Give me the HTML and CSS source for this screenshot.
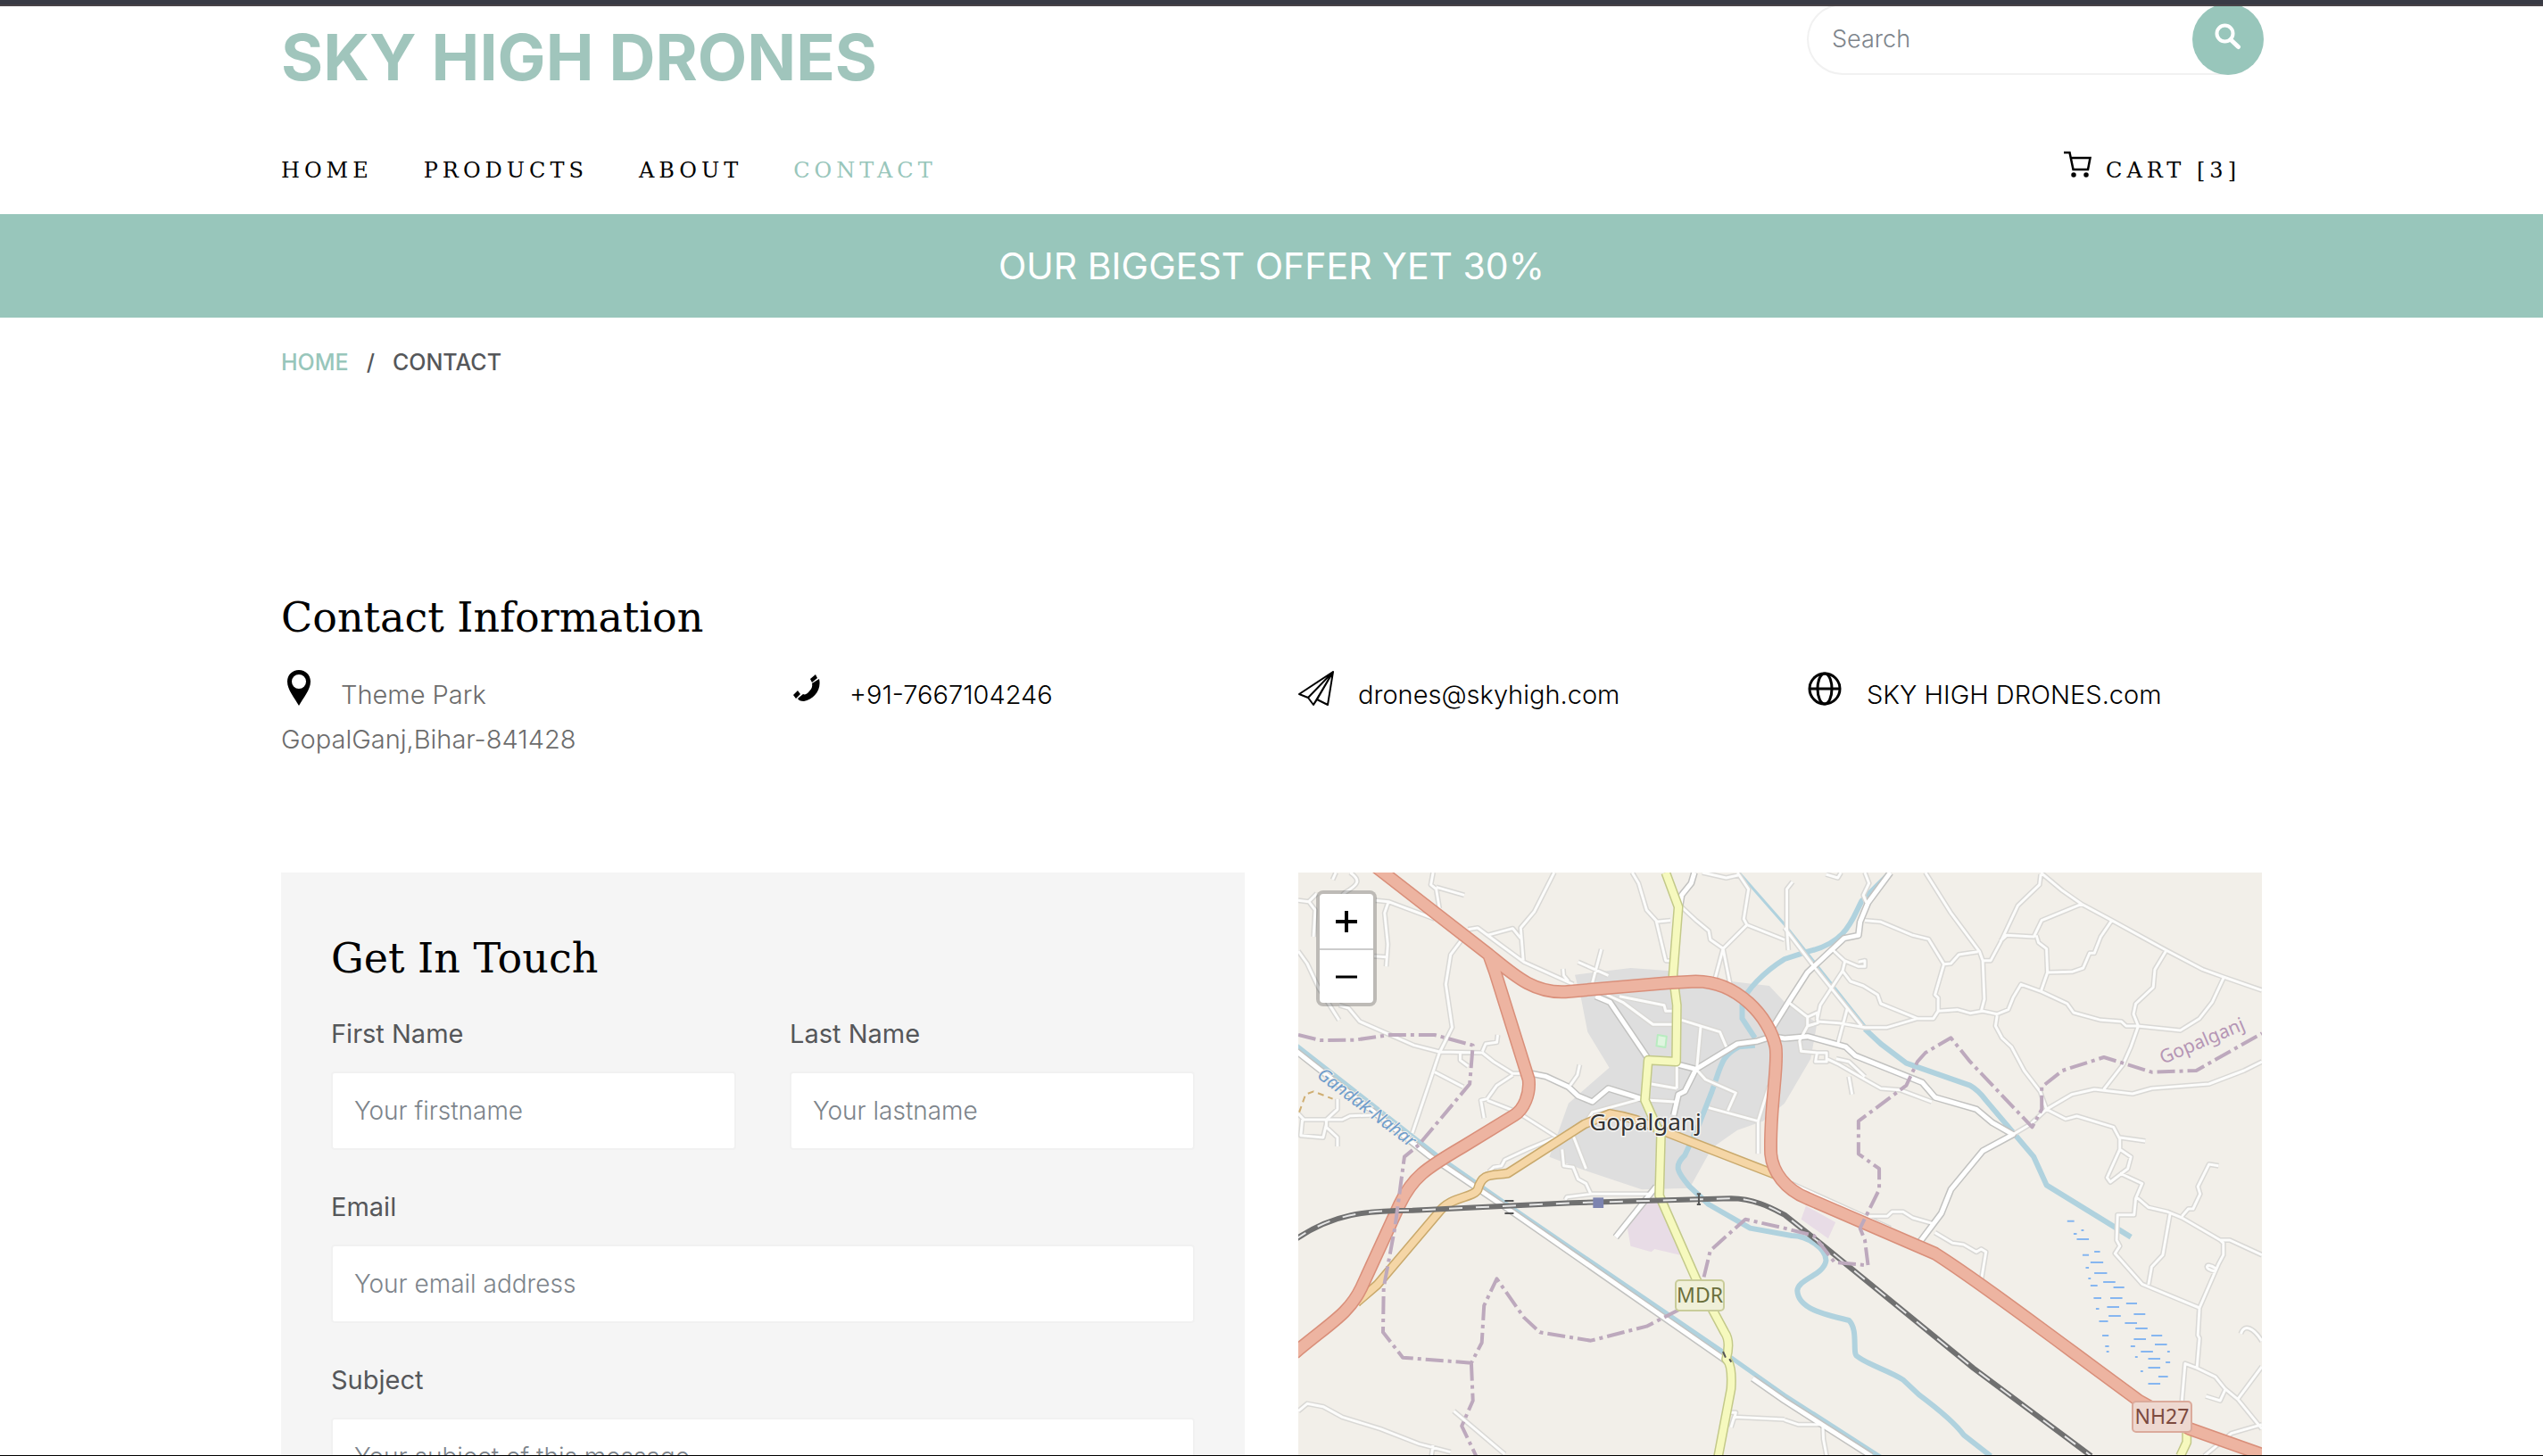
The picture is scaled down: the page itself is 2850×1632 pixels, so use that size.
FILE: index.html
```
<!DOCTYPE html>
<html lang="en">
<head>
<meta charset="utf-8">
<meta name="viewport" content="width=device-width, initial-scale=1">
<title>Contact - SKY HIGH DRONES</title>
<link rel="stylesheet" href="styles.css">
</head>
<body>
<div class="page">
  <header class="container">
    <div class="header-top">
      <a class="logo" href="#">SKY HIGH DRONES</a>
      <form class="search">
        <input type="search" placeholder="Search" aria-label="Search">
        <button type="submit" aria-label="Search">
          <svg width="30" height="30" viewBox="0 0 30 30" fill="none" stroke="#fff"><circle cx="11.500" cy="11.500" r="9" stroke-width="4"/><path d="M18 18.500l8.500 8" stroke-width="5" stroke-linecap="round"/></svg>
        </button>
      </form>
    </div>
    <nav class="nav">
      <a href="#">HOME</a>
      <a href="#">PRODUCTS</a>
      <a href="#">ABOUT</a>
      <a class="active" href="#">CONTACT</a>
      <a class="cart" href="#"><svg width="31" height="30" viewBox="0 0 31 30" fill="none" stroke="#000" stroke-width="2.500"><path d="M0 2h6.500l4 19h16.500l2.500-13H8"/><circle cx="11" cy="27" r="1.500" fill="#000"/><circle cx="25" cy="27" r="1.500" fill="#000"/></svg>CART [3]</a>
    </nav>
  </header>

  <div class="offer">OUR BIGGEST OFFER YET 30%</div>

  <div class="container breadcrumb"><a href="#">HOME</a><span class="slash">/</span><strong>CONTACT</strong></div>

  <main class="container">
    <section class="info">
      <h2>Contact Information</h2>
      <div class="info-row">
        <p class="address"><svg class="icon" width="44" height="42" viewBox="0 0 44 42"><path fill-rule="evenodd" d="M20 1c7.500 0 13 5.500 13 13 0 9-8 18-13 27-5-9-13-18-13-27C7 6.500 12.500 1 20 1zm0 5a8 8 0 1 0 0 16 8 8 0 0 0 0-16z"/></svg>Theme Park<br>GopalGanj,Bihar-841428</p>
        <p><a href="#"><svg class="icon" width="44" height="42" viewBox="0 0 44 42"><path d="M33 11c3 12-6 23-17 25-4 0-6-1-7-3l6-5c2 1 4 0 6-2 3-3 5-6 4-10zM4 29l5-5 3 4-5 5zM23 11l6-5 2 4-6 5z"/></svg>+91-7667104246</a></p>
        <p><a href="#"><svg class="icon" width="44" height="42" viewBox="0 0 44 42" fill="none" stroke="#000" stroke-width="2" stroke-linejoin="round"><path d="M39 3L1 28l10 4 6 8 4-6 12 6zM39 3L11 32M39 3L17 40M39 3L21 34"/></svg>drones@skyhigh.com</a></p>
        <p><a href="#"><svg class="icon" width="44" height="42" viewBox="0 0 44 42" fill="none" stroke="#000" stroke-width="3"><circle cx="20" cy="22" r="17"/><ellipse cx="20" cy="22" rx="8" ry="17"/><path d="M3 22h34"/></svg>SKY HIGH DRONES.com</a></p>
      </div>
    </section>

    <section class="columns">
      <form class="card">
        <h2>Get In Touch</h2>
        <div class="fields">
          <div class="field"><label for="fname">First Name</label><input id="fname" type="text" placeholder="Your firstname"></div>
          <div class="field"><label for="lname">Last Name</label><input id="lname" type="text" placeholder="Your lastname"></div>
          <div class="field wide"><label for="email">Email</label><input id="email" type="email" placeholder="Your email address"></div>
          <div class="field wide"><label for="subject">Subject</label><input id="subject" type="text" placeholder="Your subject of this message"></div>
        </div>
      </form>

      <div class="map">
        <svg class="tiles" viewBox="0 0 1080 654" role="img" aria-label="Map of Gopalganj">
          <defs>
            <path id="lanes" d="M150 78l10-24M205 54C240 80 230 95 190 120L180 130M42 148L75 152L100 125M285 148L325 152L470 210M325 152L313 190L323 295L318 370M280 335L318 338M75 152L95 180L90 270M42 318L70 360L105 440L170 550M465 54L458 95L475 110L485 175M475 103L563 130M845 54L783 185L740 240L748 350M575 245L605 240L680 300L750 355L905 430M635 265L715 242L740 275M555 280L520 330L505 430L525 575L485 660L460 740L400 930M170 500L200 510L235 555L405 635L485 657L620 660L655 690L715 730L770 730M620 655L630 630L665 625L668 600M550 660L550 685L575 705M470 725L560 775M715 735L665 770L635 815L615 820L625 880M635 820L730 860L855 945M925 700L918 735L895 770M920 355L1015 400M993 312L965 425M873 378L875 400L890 420M42 865L60 885L130 885L180 885L205 872L280 870M165 815L165 850L130 885L130 910L165 945L165 975M55 885L50 938L120 945L130 900M1090 54L1110 90L1135 180L1165 215L1195 350L1215 352M1165 220L1210 215M1240 165L1290 215L1330 250L1335 280L1375 310L1350 410M1375 310L1400 445M1375 310L1450 230L1440 210L1455 110L1420 54M1450 230L1568 280M1310 54L1385 72L1425 62M1010 465L1060 490L1155 565L1220 565M1050 470L1190 500L1195 520L1220 520M1245 550L1365 590L1385 640M1305 570L1293 710M1150 765L1230 780M1145 820L1225 825M1230 705L1230 780M1290 715L1320 750L1415 795L1390 855M1330 845L1485 890M1520 770L1485 890L1485 1000M1120 815L965 860L940 900M1593 85L1575 110L1575 240L1580 315M1698 60L1735 72L1745 54M1820 54L1833 90L1815 130L1825 155M2010 54L2090 190L2180 320L2190 350L2215 350L2245 290L2300 165L2368 95L2372 60M2372 54L2440 115L2500 160L2595 215L2765 315L2880 380L2945 405L3066 450M1820 215L1870 220L1970 265L2020 278L2068 362L2090 360L2115 330L2175 320M2068 362L2040 465L2050 475L2050 520L2035 545L1985 545L1890 575L1820 575L1740 560L1670 555M2050 520L2110 515L2150 527L2190 520L2235 530L2270 515L2285 475L2310 430L2375 455L2455 495L2475 525L2560 550L2625 555L2640 570L2675 570L2810 585L2870 545L2910 490L2945 410M2190 350L2195 480L2185 520M2245 285L2265 265L2350 270L2375 215L2500 160M2358 265L2365 290L2390 310L2393 390L2372 455M2393 390L2470 388L2505 375L2525 325L2540 325L2560 270L2595 215M2765 318L2730 380L2725 440L2670 495L2663 530L2678 570L2655 640L2630 700L2570 783M2235 535L2230 570L2250 610L2280 640L2320 720L2370 790L2390 850M2285 935L2340 900L2390 850L2470 800L2540 783L2660 798L2720 780L2900 765L3010 720L3066 690M2390 850L2450 883L2485 873L2600 910L2620 950L2620 985L2580 1080L2590 1095L2645 1050L2655 1010L2620 985M2620 945L2700 957M1568 240L1660 370L1810 570M1720 315L1755 350L1800 370L1820 370L1820 350L1800 355M1758 350L1750 385L1680 500L1670 550M1750 385L1775 420L1815 435L1860 465L1870 495L1985 545M1765 510L1750 570L1735 630M1580 490L1640 540L1670 525L1672 560L1640 570L1640 540M1640 570L1615 620L1620 655L1670 660L1665 690L1700 690L1700 660L1670 660M1700 680L1740 700L1820 750L1870 780L1930 785L2030 825M1770 740L1775 770L1780 800M1730 680L1770 690L1820 740M2620 1065L2690 1100L2670 1150L2665 1205L2613 1205L2610 1290L2620 1310L2605 1335L2690 1438L2870 1518L2930 1370L2945 1340L2945 1300L2935 1290L2815 1215L2770 1195L2710 1180L2672 1145M2935 1290L2965 1290L3066 1340M2815 1210L2835 1185L2850 1185L2872 1135L2865 1110L2900 1035L2930 1040M2778 1200L2755 1340L2720 1380L2710 1440M2870 1518L2865 1610L2870 1620L2862 1720L2825 1705L2815 1830M2862 1720L2920 1750L2950 1790L2990 1825L3066 1925M2950 1795L2935 1830L2890 1815M2990 1825L3066 1715M3066 1910L2970 1940L2885 2016M3000 1605C3010 1570 3040 1585 3066 1630M2920 1395C2880 1390 2890 1360 2920 1385M2183 1440L2200 1330L2185 1320L2170 1330L2130 1305L2095 1300L2040 1265M1830 1210L1890 1210L1905 1195L1940 1195L1970 1215L2035 1235M1590 1100L1900 1250M1568 1895L1610 1910L1680 1910M1688 1910L1690 1960L1700 2016M42 1865L70 1840L120 1850L180 1885L300 1925L420 1975L520 2003M465 1980L460 2016M530 1865L690 2010M1568 1893L1410 1885L1400 1920M1395 1870L1415 1870L1410 1890M640 1060L655 1045L680 1040L690 1020L760 985L850 945M870 985L875 1040L905 1045L920 1085L945 1100L960 1135M905 940L945 1050M880 1155L885 1145L960 1135L1150 1135"/>
            <path id="streets" d="M1285 54L1275 90L1245 130L1240 165M975 470L1020 490L1140 680M775 730L820 740L890 775L920 805L965 825L1015 780L1120 815M1235 700L1290 715L1420 630L1480 622L1530 605L1568 612L1640 605L1760 640L1790 670L2000 760L2040 810L2170 850L2220 895L2285 935L2190 990L2090 1120L2060 1200L1990 1300M1290 715L1255 790L1235 800L1220 870M1525 585L1580 490L1640 390L1755 275L1800 265L1805 220L1830 155L1900 54M1165 1110L1038 1280M30 650L455 1008L720 1200L1390 1700M1468 1755L1568 1830L1840 2016"/>
            <path id="county" d="M1195 54L1235 170L1218 400L1230 500L1228 690L1140 685L1130 820L1180 940L1175 1140L1290 1420L1380 1600Q1400 1630 1385 1690Q1405 1710 1400 1790L1360 2016M2830 1930L2830 1970L2810 2016"/>
            <path id="secondary" d="M225 1500L290 1440L480 1200C520 1140 590 1150 605 1120C620 1060 650 1075 700 1065L940 900L1020 865C1080 875 1120 890 1180 920L1540 1070"/>
            <path id="trunk" d="M280 30L640 330C720 400 780 460 880 455L1200 425L1290 420C1420 420 1520 540 1540 640C1550 700 1520 850 1525 1000C1530 1060 1570 1120 1640 1150L2040 1335C2180 1430 2400 1610 2680 1830L2840 1925L3090 2020M640 330L660 390L765 750C770 800 750 850 720 870L560 975C440 1050 400 1080 360 1170L240 1450C200 1540 140 1570 30 1670"/>
            <path id="rail" d="M30 1290C150 1200 260 1190 400 1190L900 1165L1400 1150C1480 1150 1540 1190 1568 1205L1680 1300L2160 1720L2530 2016"/>
          </defs>
          <g class="geo" transform="translate(-15 -18) scale(.35714 .33333)">
            <path fill="#dedede" d="M910 398L1085 375L1210 385L1290 430L1400 420L1520 435L1568 490L1670 560L1650 680L1568 830L1500 890L1420 920L1340 980L1270 1115L1120 1120L940 1055L830 1010L890 830L1018 710L950 590L930 480Z"/>
            <path fill="#e8dce6" d="M1135 1165L1190 1165L1240 1340L1160 1320L1150 1330L1085 1310L1075 1250ZM1635 1175L1728 1230L1705 1285L1620 1220Z"/>
            <path fill="#dff5df" stroke="#b8ecc0" stroke-width="2" d="M1170 600L1198 605L1194 642L1166 637Z"/>
            <g class="water">
              <path stroke-width="6" d="M1900 54L1810 150C1780 210 1765 290 1640 320L1568 345C1500 390 1450 450 1435 490L1435 545L1475 610M1475 635L1425 640C1370 670 1370 700 1340 790L1300 900L1255 1005C1220 1040 1230 1060 1270 1110L1330 1170L1460 1250L1590 1275C1640 1275 1700 1320 1698 1360C1690 1410 1610 1420 1608 1460C1610 1520 1690 1540 1770 1560C1800 1590 1780 1670 1795 1680C1830 1710 1900 1730 1940 1760L1990 1810C2040 1850 2100 1900 2130 1945L2215 2016M1820 580L1870 630L1950 695L2150 770Q2175 785 2200 820L2350 1010L2390 1105L2655 1280"/>
              <path stroke-width="5" d="M30 630L480 1008L690 1165L1380 1670L1568 1812L1870 2020"/>
              <path stroke-width="3" d="M1425 54L1573 235L1835 590"/>
            </g>
            <use href="#lanes" stroke="#d9d8d5" stroke-width="6"/><use href="#streets" stroke="#c2c2c0" stroke-width="8"/>
            <use href="#lanes" stroke="#fcfcfb" stroke-width="3"/><use href="#streets" stroke="#fff" stroke-width="5"/>
            <use href="#secondary" stroke="#c9a96c" stroke-width="11"/><use href="#secondary" stroke="#f5d6a6" stroke-width="8"/>
            <use href="#county" stroke="#c3c989" stroke-width="11"/><use href="#county" stroke="#f6f9be" stroke-width="8"/>
            <use href="#trunk" stroke="#d98f7a" stroke-width="15"/><use href="#trunk" stroke="#edb4a1" stroke-width="12"/>
            <use href="#rail" stroke="#707070" stroke-width="6"/><use href="#rail" stroke="#e6e6e6" stroke-width="2" stroke-dasharray="15 15"/>
            <path class="border" d="M42 600L110 618L220 617L330 600L470 600L590 635L580 765L420 970L375 1010L345 1250L310 1450L308 1600L370 1685L585 1703L618 1635L625 1510L665 1420L750 1550L800 1600L960 1628L1135 1580L1230 1528L1300 1480L1335 1325L1445 1220L1568 1250L1660 1275L1725 1365L1830 1375L1820 1290L1805 1250L1865 1120L1865 1050L1800 1000L1800 890L1950 770L1985 690L2010 660L2090 610L2150 690L2345 910L2375 850L2375 775L2440 720L2570 675L2720 725L2860 720L3066 595M585 1703L590 1830L555 1915L600 2016"/>
            <path stroke="#cfae72" stroke-width="2" stroke-dasharray="7 5" d="M45 860L65 800L90 790L150 815"/>
            <path stroke="#555" stroke-width="2" d="M690 1158h28M690 1200h28M1293 1135h12M1293 1170h12M1299 1135v35M1375 1665l8 20M1395 1690l6 10"/>
            <path fill="#7d84b0" d="M967 1147h33v35h-33z"/>
            <path stroke="#86b6f0" stroke-width="2" d="M2455 1226h22M2499 1257h8M2475 1269h10M2485 1287h38M2540 1329h18M2503 1340h20M2528 1365h40M2513 1383h10M2540 1401h40M2521 1419h8M2568 1431h38M2528 1443h22M2600 1449h34M2538 1485h24M2590 1485h38M2640 1503h34M2545 1521h10M2580 1515h38M2664 1539h36M2585 1545h38M2555 1563h28M2636 1569h38M2669 1587h38M2565 1611h20M2719 1611h34M2664 1623h38M2730 1641h38M2574 1647h12M2654 1647h14M2578 1665h8M2686 1665h38M2769 1665h8M2668 1683h8M2709 1689h38M2764 1701h14M2709 1719h38M2685 1731h8M2741 1749h30M2709 1773h38"/>
          </g>
          <rect x="423" y="457" width="54" height="34" rx="4" fill="#f0f0d9" stroke="#c9cc9a" stroke-width="2"/>
          <rect x="935" y="593" width="66" height="34" rx="4" fill="#eed8d0" stroke="#dbaa9b" stroke-width="2"/>
          <text class="route" x="450" y="482" fill="#6b6f3c">MDR</text>
          <text class="route" x="968" y="618" fill="#7c4a3f">NH27</text>
          <text class="town" x="389" y="289">Gopalganj</text>
          <text class="canal" transform="translate(20 229) rotate(37)">Gandak-Nahar</text>
          <text class="district" transform="translate(969 215) rotate(-23)">Gopalganj</text>
        </svg>
        <div class="zoom">
          <button type="button" aria-label="Zoom in"><svg width="24" height="24" viewBox="0 0 24 24" stroke="#000" stroke-width="4"><path d="M0 12h24M12 0v24"/></svg></button>
          <button type="button" aria-label="Zoom out"><svg width="24" height="24" viewBox="0 0 24 24" stroke="#000" stroke-width="3"><path d="M0 12h24"/></svg></button>
        </div>
      </div>
    </section>
  </main>
</div>
</body>
</html>
```
FILE: styles.css
```
*, *::before, *::after { box-sizing: border-box; }

body {
  margin: 0;
  background: #fff;
  color: #000;
  font-family: Inter, "Open Sans", sans-serif;
  font-size: 29px;
  font-weight: 300;
  line-height: 50px;
}

a { color: inherit; text-decoration: none; }
svg { display: block; }

h2 {
  margin: 0;
  font-family: "DejaVu Serif", serif;
  font-size: 46px;
  font-weight: 400;
  line-height: 56px;
}

.page {
  position: relative;
  height: 100vh;
  overflow: hidden;
}

.page::before {
  content: "";
  position: absolute;
  inset: 0 0 auto;
  z-index: 2;
  height: 7px;
  background: #393b45;
  border-bottom: 2px solid #484347;
}

.page::after {
  content: "";
  position: absolute;
  inset: auto 0 0;
  z-index: 2;
  height: 1px;
  background: #000;
}

.container {
  max-width: 2280px;
  margin: 0 auto;
  padding: 0 30px;
}

header.container { padding-top: 4px; }

.header-top {
  display: flex;
  justify-content: space-between;
  align-items: flex-start;
}

.logo {
  color: #a0c5bc;
  font-size: 72px;
  font-weight: 700;
  line-height: 120px;
}

.search {
  display: flex;
  justify-content: space-between;
  width: 512px;
  height: 80px;
  margin-right: -2px;
  border-radius: 40px;
  box-shadow: inset 0 0 0 2px #f1f1f1;
}

.search input {
  flex: 1;
  min-width: 0;
  padding: 0 28px 2px;
  border: 0;
  background: none;
  font: 300 27px Inter, sans-serif;
}

.search button {
  display: grid;
  place-items: center;
  width: 80px;
  height: 80px;
  padding: 0 0 6px;
  border: 0;
  border-radius: 50%;
  background: #98c6bb;
}

input::placeholder { color: #7d848b; opacity: 1; }

.nav {
  display: flex;
  gap: 57px;
  padding: 45px 24px 27px 0;
  font-family: "DejaVu Serif", serif;
  font-size: 24px;
  font-weight: 400;
  letter-spacing: 5px;
  line-height: 44px;
}

.nav .active { color: #98c6bb; }

.cart {
  display: flex;
  gap: 16px;
  margin-left: auto;
}

.offer {
  background: #98c6bb;
  color: #fff;
  font-size: 41px;
  font-weight: 400;
  line-height: 116px;
  text-align: center;
}

.breadcrumb {
  display: flex;
  gap: 20px;
  padding-top: 28px;
  color: #55575a;
  font-size: 25px;
  font-weight: 500;
  line-height: 44px;
}

.breadcrumb a { color: #98c6bb; }
.breadcrumb strong { font-weight: 500; }

.info { padding: 236px 0 124px; }

.info-row {
  display: grid;
  grid-template-columns: repeat(4, 1fr);
  gap: 60px;
  padding-top: 34px;
}

.info p { margin: 0; white-space: nowrap; }
.address { color: #6c6c6c; }

.icon {
  display: inline-block;
  margin: -8px 23px 0 0;
  vertical-align: -3px;
}

.address .icon { fill: #000; }

.columns {
  display: grid;
  grid-template-columns: 1fr 1fr;
  gap: 60px;
}

.card {
  padding: 68px 56px;
  background: #f5f5f5;
}

.fields {
  display: grid;
  grid-template-columns: 1fr 1fr;
  gap: 42px 60px;
  padding-top: 35px;
}

.field { display: grid; gap: 20px; }
.wide { grid-column: 1 / -1; }

.field label {
  color: #55575a;
  font-size: 29px;
  font-weight: 400;
  line-height: 44px;
}

.field input {
  width: 100%;
  height: 88px;
  padding: 0 24px;
  border: 2px solid #f1f1f1;
  border-radius: 4px;
  background: #fff;
  font: 300 28px Inter, sans-serif;
}

.map {
  position: relative;
  overflow: hidden;
  background: #f2efe9;
}

.tiles { width: 100%; height: auto; }
.tiles path { vector-effect: non-scaling-stroke; }

.geo, .tiles defs {
  fill: none;
  stroke-linejoin: round;
}

.water { stroke: #b0d2de; }

.border {
  stroke: #bda9bd;
  stroke-width: 4px;
  stroke-dasharray: 20 5 4 5;
}

.tiles text {
  font-family: "Noto Sans", sans-serif;
  font-weight: 400;
  paint-order: stroke;
}

.route { font-size: 23px; text-anchor: middle; }

.town {
  fill: #333;
  stroke: #f4f4f2;
  stroke-width: 3px;
  font-size: 26px;
  text-anchor: middle;
}

.canal {
  fill: #6f9dcc;
  stroke: #f2efe9;
  stroke-width: 2px;
  font-size: 20px;
  font-style: italic;
}

.district {
  fill: #b596b5;
  stroke: #f2efe9;
  stroke-width: 2px;
  font-size: 21px;
}

.zoom {
  position: absolute;
  top: 20px;
  left: 20px;
  width: 68px;
  border: 4px solid rgba(0, 0, 0, .22);
  border-radius: 8px;
  background: #fff;
  background-clip: padding-box;
}

.zoom button {
  display: grid;
  place-items: center;
  width: 60px;
  height: 61px;
  padding: 0;
  border: 0;
  background: none;
}

.zoom button + button { border-top: 2px solid #ccc; }
```
